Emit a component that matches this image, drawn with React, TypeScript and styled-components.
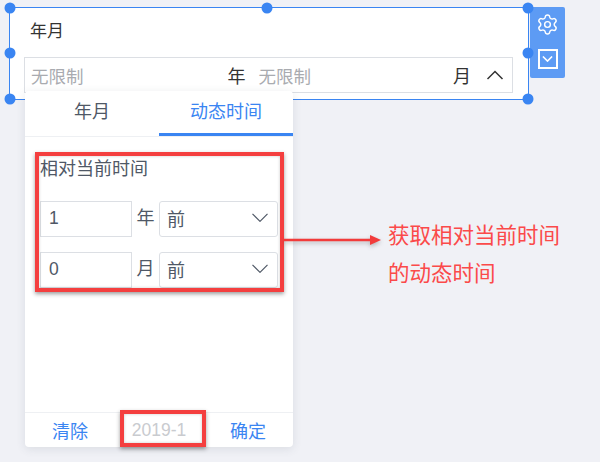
import { FC } from 'react';
import styled, { createGlobalStyle } from 'styled-components';
import { Settings } from 'lucide-react';

interface IPropsHandle {
  x: string;
  y: string;
}

interface IPropsTab {
  active?: boolean;
}

interface IPropsHighlight {
  left: number;
  top: number;
  width: number;
  height: number;
}

const Chevron: FC<{ up?: boolean; size?: number; weight?: number }> = ({ up, size = 24, weight = 1.6 }) => (
  <svg width={size} height={size * 0.55} viewBox='0 0 24 13' fill='none' stroke='currentColor' strokeWidth={weight}>
    <path d={up ? 'M2 12 L12 2 L22 12' : 'M2 1 L12 11 L22 1'} />
  </svg>
);

const App: FC = () => {
  return (
    <Page>
      <GlobalStyle />

      <Widget>
        <Title>年月</Title>
        <RangeInput>
          <Placeholder>无限制</Placeholder>
          <YearUnit>年</YearUnit>
          <Placeholder>无限制</Placeholder>
          <MonthUnit>月</MonthUnit>
          <RangeArrow>
            <Chevron up size={18} weight={2} />
          </RangeArrow>
        </RangeInput>

        <Handle x='0%' y='0%' />
        <Handle x='49.6%' y='0%' />
        <Handle x='100%' y='0%' />
        <Handle x='0%' y='49%' />
        <Handle x='100%' y='49%' />
        <Handle x='0%' y='100%' />
        <Handle x='100%' y='100%' />
      </Widget>

      <Toolbar>
        <Settings size={23} strokeWidth={1.5} color='#fff' />
        <DropBox>
          <Chevron size={11} weight={3.5} />
        </DropBox>
      </Toolbar>

      <Popup>
        <Tabs>
          <Tab>年月</Tab>
          <Tab active>动态时间</Tab>
        </Tabs>

        <Body>
          <BodyTitle>相对当前时间</BodyTitle>
          <Row>
            <NumberBox>1</NumberBox>
            <RowUnit>年</RowUnit>
            <SelectBox>
              <span>前</span>
              <Chevron size={18} />
            </SelectBox>
          </Row>
          <Row>
            <NumberBox>0</NumberBox>
            <RowUnit>月</RowUnit>
            <SelectBox>
              <span>前</span>
              <Chevron size={18} />
            </SelectBox>
          </Row>
        </Body>

        <Footer>
          <FooterAction>清除</FooterAction>
          <FooterValue>2019-1</FooterValue>
          <FooterAction>确定</FooterAction>
        </Footer>

        <Highlight left={10} top={61} width={249} height={140} />
        <Highlight left={95} top={319} width={86} height={37} />
      </Popup>

      <Arrow width='100' height='12' viewBox='0 0 100 12'>
        <path d='M0 6 H88' stroke='#f23b3b' strokeWidth='2.4' />
        <path d='M86 1 L97 6 L86 11 Z' fill='#f23b3b' />
      </Arrow>

      <Note>
        获取相对当前时间
        <br />
        的动态时间
      </Note>
    </Page>
  );
};

const GlobalStyle = createGlobalStyle`
  html, body {
    margin: 0;
    padding: 0;
    background: #f0f1f6;
  }

  * {
    box-sizing: border-box;
  }
`;

const Page = styled.div`
  width: 600px;
  height: 462px;
  padding: 7px 0 0 9px;
  display: flex;
  align-items: flex-start;
  gap: 1px;
  position: relative;
  overflow: hidden;
  background: #f0f1f6;
  font-family: "Liberation Sans", "Noto Sans CJK SC", sans-serif;
`;

const Widget = styled.div`
  width: 520px;
  height: 93px;
  padding: 12px 14px 0;
  flex-shrink: 0;
  border: 1.5px solid #3a85f2;
  background: #fff;
  position: relative;
`;

const Title = styled.div`
  height: 22px;
  margin-left: 6px;
  color: #333;
  font-size: 17px;
  line-height: 23px;
`;

const RangeInput = styled.div`
  width: 489px;
  height: 36px;
  margin-top: 15px;
  padding: 0 8px 0 6px;
  border: 1.5px solid #dcdfe4;
  display: flex;
  align-items: center;
  color: #333;
  font-size: 18px;
`;

const Placeholder = styled.span`
  color: #a9abb0;
  font-size: 17.5px;
`;

const YearUnit = styled.span`
  margin: 0 13px 0 144px;
`;

const MonthUnit = styled.span`
  margin-left: auto;
`;

const RangeArrow = styled.span`
  margin-left: 15px;
  display: flex;
  color: #333;
`;

const Handle = styled.span<IPropsHandle>`
  width: 11px;
  height: 11px;
  border-radius: 50%;
  background: #3a85f2;
  position: absolute;
  left: ${(props) => props.x};
  top: ${(props) => props.y};
  transform: translate(-50%, -50%);
`;

const Toolbar = styled.div`
  width: 35px;
  height: 71px;
  padding: 6px 0 9px;
  border-radius: 2px;
  background: #5d9bf4;
  display: flex;
  flex-direction: column;
  align-items: center;
  justify-content: space-between;
`;

const DropBox = styled.div`
  width: 20px;
  height: 20px;
  border: 2px solid #fff;
  display: flex;
  align-items: center;
  justify-content: center;
  color: #fff;
`;

const Popup = styled.div`
  width: 268px;
  height: 356px;
  border-radius: 4px;
  background: #fff;
  box-shadow: 0 2px 10px rgba(60, 70, 90, 0.12);
  display: flex;
  flex-direction: column;
  position: absolute;
  left: 25px;
  top: 91px;
`;

const Tabs = styled.div`
  height: 46px;
  border-bottom: 1px solid #eef0f3;
  display: grid;
  grid-template-columns: 134px 134px;
`;

const Tab = styled.div<IPropsTab>`
  height: 45px;
  border-bottom: ${(props) => props.active ? '3px solid #3a85f2' : 'none'};
  color: ${(props) => props.active ? '#3a85f2' : '#4f5866'};
  font-size: 18px;
  line-height: 43px;
  text-align: center;
`;

const Body = styled.div`
  flex: 1;
  padding: 20px 15px 0;
`;

const BodyTitle = styled.div`
  height: 24px;
  margin-bottom: 20px;
  color: #4f5866;
  font-size: 18px;
  line-height: 24px;
`;

const Row = styled.div`
  height: 36px;
  margin-bottom: 15px;
  display: flex;
  align-items: stretch;
`;

const NumberBox = styled.div`
  width: 92px;
  padding-left: 8px;
  border: 1.5px solid #dcdfe4;
  color: #4f5866;
  font-size: 17.5px;
  line-height: 32px;
`;

const RowUnit = styled.div`
  width: 27px;
  color: #4f5866;
  font-size: 18px;
  line-height: 35px;
  text-align: center;
`;

const SelectBox = styled.div`
  width: 119px;
  padding: 0 8px 3px 7px;
  border: 1.5px solid #dcdfe4;
  border-radius: 3px;
  display: flex;
  align-items: center;
  justify-content: space-between;
  color: #4f5866;
  font-size: 18px;
`;

const Footer = styled.div`
  height: 35px;
  padding: 0 27px 0 27px;
  border-top: 1px solid #eef0f3;
  display: flex;
  align-items: center;
  justify-content: space-between;
  font-size: 18px;
`;

const FooterAction = styled.span`
  color: #3a85f2;
`;

const FooterValue = styled.span`
  color: #c9cbcf;
  font-size: 17.5px;
`;

const Highlight = styled.div<IPropsHighlight>`
  width: ${(props) => props.width}px;
  height: ${(props) => props.height}px;
  border: 4px solid #f43f3f;
  box-shadow: 0 2px 4px rgba(40, 40, 40, 0.45), inset 0 0 3px rgba(40, 40, 40, 0.25);
  position: absolute;
  left: ${(props) => props.left}px;
  top: ${(props) => props.top}px;
`;

const Arrow = styled.svg`
  position: absolute;
  left: 284px;
  top: 234px;
  filter: drop-shadow(0 2px 2px rgba(40, 40, 40, 0.3));
`;

const Note = styled.div`
  position: absolute;
  left: 388px;
  top: 217px;
  color: #fb4a4a;
  font-size: 21.5px;
  line-height: 38px;
`;

export default App;
